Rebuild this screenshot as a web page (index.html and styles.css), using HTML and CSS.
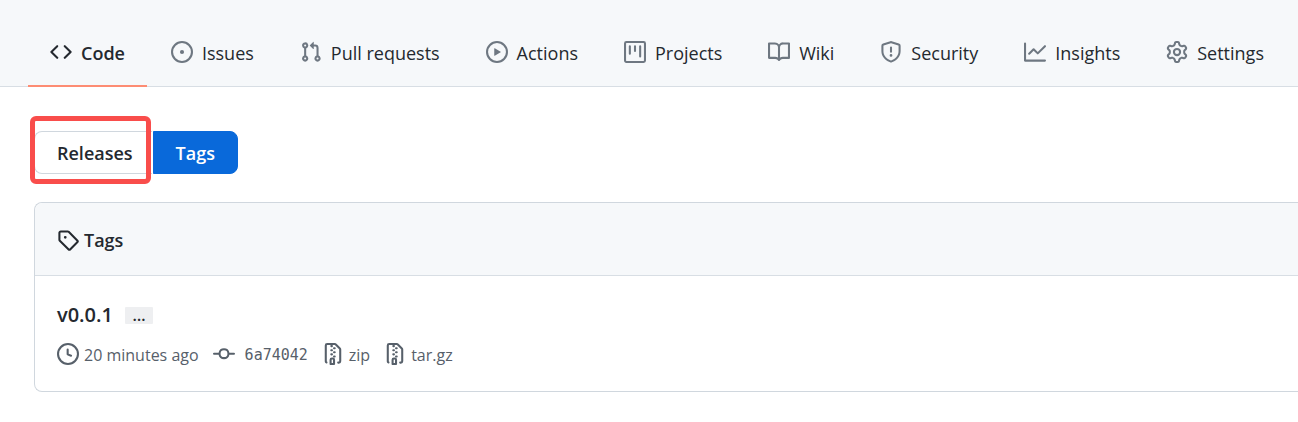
FILE: index.html
```html
<!DOCTYPE html>
<html lang="en">
<head>
<meta charset="utf-8">
<title>Tags</title>
<link rel="stylesheet" href="styles.css">
</head>
<body>
<header class="repo-header">
  <nav class="repo-nav" aria-label="Repository">
    <a class="tab tab-current" href="#code" aria-current="page">
      <svg class="icon" viewBox="0 0 16 16" aria-hidden="true"><path fill-rule="evenodd" d="M4.72 3.22a.75.75 0 011.06 1.06L2.06 8l3.72 3.72a.75.75 0 11-1.06 1.06L.47 8.53a.75.75 0 010-1.06l4.25-4.25zm6.56 0a.75.75 0 10-1.06 1.06L13.94 8l-3.72 3.72a.75.75 0 101.06 1.06l4.25-4.25a.75.75 0 000-1.06l-4.25-4.25z"/></svg>
      <span class="label">Code</span></a>
    <a class="tab" href="#issues">
      <svg class="icon" viewBox="0 0 16 16" aria-hidden="true"><path d="M8 9.5a1.5 1.5 0 100-3 1.5 1.5 0 000 3z"/><path fill-rule="evenodd" d="M8 0a8 8 0 100 16A8 8 0 008 0zM1.5 8a6.5 6.5 0 1113 0 6.5 6.5 0 01-13 0z"/></svg>
      <span class="label">Issues</span></a>
    <a class="tab" href="#pulls">
      <svg class="icon" viewBox="0 0 16 16" aria-hidden="true"><path fill-rule="evenodd" d="M7.177 3.073L9.573.677A.25.25 0 0110 .854v4.792a.25.25 0 01-.427.177L7.177 3.427a.25.25 0 010-.354zM3.75 2.5a.75.75 0 100 1.5.75.75 0 000-1.5zm-2.25.75a2.25 2.25 0 113 2.122v5.256a2.251 2.251 0 11-1.5 0V5.372A2.25 2.25 0 011.5 3.25zM11 2.5h-1V4h1a1 1 0 011 1v5.628a2.251 2.251 0 101.5 0V5A2.5 2.5 0 0011 2.5zm1 10.25a.75.75 0 111.5 0 .75.75 0 01-1.5 0zM3.75 12a.75.75 0 100 1.5.75.75 0 000-1.5z"/></svg>
      <span class="label">Pull requests</span></a>
    <a class="tab" href="#actions">
      <svg class="icon" viewBox="0 0 16 16" aria-hidden="true"><path fill-rule="evenodd" d="M1.5 8a6.5 6.5 0 1113 0 6.5 6.5 0 01-13 0zM8 0a8 8 0 100 16A8 8 0 008 0zM6.379 5.227A.25.25 0 006 5.442v5.117a.25.25 0 00.379.214l4.264-2.559a.25.25 0 000-.428L6.379 5.227z"/></svg>
      <span class="label">Actions</span></a>
    <a class="tab" href="#projects">
      <svg class="icon" viewBox="0 0 16 16" aria-hidden="true"><path fill-rule="evenodd" d="M1.75 0A1.75 1.75 0 000 1.75v12.5C0 15.216.784 16 1.75 16h12.5A1.75 1.75 0 0016 14.25V1.75A1.75 1.75 0 0014.25 0H1.75zM1.5 1.75a.25.25 0 01.25-.25h12.5a.25.25 0 01.25.25v12.5a.25.25 0 01-.25.25H1.75a.25.25 0 01-.25-.25V1.75zM11.75 3a.75.75 0 00-.75.75v7.5a.75.75 0 001.5 0v-7.5a.75.75 0 00-.75-.75zm-8.25.75a.75.75 0 011.5 0v5.5a.75.75 0 01-1.5 0v-5.5zM8 3a.75.75 0 00-.75.75v3.5a.75.75 0 001.5 0v-3.5A.75.75 0 008 3z"/></svg>
      <span class="label">Projects</span></a>
    <a class="tab" href="#wiki">
      <svg class="icon" viewBox="0 0 16 16" aria-hidden="true"><path fill-rule="evenodd" d="M0 1.75A.75.75 0 01.75 1h4.253c1.227 0 2.317.59 3 1.501A3.744 3.744 0 0111.006 1h4.245a.75.75 0 01.75.75v10.5a.75.75 0 01-.75.75h-4.507a2.25 2.25 0 00-1.591.659l-.622.621a.75.75 0 01-1.06 0l-.622-.621A2.25 2.25 0 005.258 13H.75a.75.75 0 01-.75-.75V1.75zm8.755 3a2.25 2.25 0 012.25-2.25H14.5v9h-3.757c-.71 0-1.4.201-1.992.572l.004-7.322zm-1.504 7.324l.004-5.073-.002-2.253A2.25 2.25 0 005.003 2.5H1.5v9h3.757a3.75 3.75 0 011.994.574z"/></svg>
      <span class="label">Wiki</span></a>
    <a class="tab" href="#security">
      <svg class="icon" viewBox="0 0 16 16" aria-hidden="true"><path fill-rule="evenodd" d="M7.467.133a1.75 1.75 0 011.066 0l5.25 1.68A1.75 1.75 0 0115 3.48V7c0 1.566-.32 3.182-1.303 4.682-.983 1.498-2.585 2.813-5.032 3.855a1.7 1.7 0 01-1.33 0c-2.447-1.042-4.049-2.357-5.032-3.855C1.32 10.182 1 8.566 1 7V3.48a1.75 1.75 0 011.217-1.667l5.25-1.68zm.61 1.429a.25.25 0 00-.153 0l-5.25 1.68a.25.25 0 00-.174.238V7c0 1.358.275 2.666 1.057 3.86.784 1.194 2.121 2.34 4.366 3.297a.2.2 0 00.154 0c2.245-.956 3.582-2.104 4.366-3.298C13.225 9.666 13.5 8.36 13.5 7V3.48a.25.25 0 00-.174-.237l-5.25-1.68zM9 10.5a1 1 0 11-2 0 1 1 0 012 0zm-.25-5.75a.75.75 0 10-1.5 0v3a.75.75 0 001.5 0v-3z"/></svg>
      <span class="label">Security</span></a>
    <a class="tab" href="#insights">
      <svg class="icon" viewBox="0 0 16 16" aria-hidden="true"><path fill-rule="evenodd" d="M1.5 1.75a.75.75 0 00-1.5 0v12.5c0 .414.336.75.75.75h14.5a.75.75 0 000-1.5H1.5V1.75zm14.28 2.53a.75.75 0 00-1.06-1.06L10 7.94 7.53 5.47a.75.75 0 00-1.06 0L3.22 8.72a.75.75 0 001.06 1.06L7 7.06l2.47 2.47a.75.75 0 001.06 0l5.25-5.25z"/></svg>
      <span class="label">Insights</span></a>
    <a class="tab" href="#settings">
      <svg class="icon" viewBox="0 0 16 16" aria-hidden="true"><path fill-rule="evenodd" d="M7.429 1.525a6.593 6.593 0 011.142 0c.036.003.108.036.137.146l.289 1.105c.147.56.55.967.997 1.189.174.086.341.183.501.29.417.278.97.423 1.53.27l1.102-.303c.11-.03.175.016.195.046.219.31.41.641.573.989.014.031.022.11-.059.19l-.815.806c-.411.406-.562.957-.53 1.456a4.588 4.588 0 010 .582c-.032.499.119 1.05.53 1.456l.815.806c.08.08.073.159.059.19a6.494 6.494 0 01-.573.99c-.02.029-.086.074-.195.045l-1.103-.303c-.559-.153-1.112-.008-1.529.27-.16.107-.327.204-.5.29-.449.222-.851.628-.998 1.189l-.289 1.105c-.029.11-.101.143-.137.146a6.613 6.613 0 01-1.142 0c-.036-.003-.108-.037-.137-.146l-.289-1.105c-.147-.56-.55-.967-.997-1.189a4.502 4.502 0 01-.501-.29c-.417-.278-.97-.423-1.53-.27l-1.102.303c-.11.03-.175-.016-.195-.046a6.492 6.492 0 01-.573-.989c-.014-.031-.022-.11.059-.19l.815-.806c.411-.406.562-.957.53-1.456a4.587 4.587 0 010-.582c.032-.499-.119-1.05-.53-1.456l-.815-.806c-.08-.08-.073-.159-.059-.19a6.44 6.44 0 01.573-.99c.02-.029.086-.075.195-.045l1.103.303c.559.153 1.112.008 1.529-.27.16-.107.327-.204.5-.29.449-.222.851-.628.998-1.189l.289-1.105c.029-.11.101-.143.137-.146zM8 0c-.236 0-.47.01-.701.03-.743.065-1.29.615-1.458 1.261l-.29 1.106c-.017.066-.078.158-.211.224a5.994 5.994 0 00-.668.386c-.123.082-.233.09-.3.071L3.27 2.776c-.644-.177-1.392.02-1.82.63a7.977 7.977 0 00-.704 1.217c-.315.675-.111 1.422.363 1.891l.815.806c.05.048.098.147.088.294a6.084 6.084 0 000 .772c.01.147-.038.246-.088.294l-.815.806c-.474.469-.678 1.216-.363 1.891.2.428.436.835.704 1.218.428.609 1.176.806 1.82.63l1.103-.303c.066-.019.176-.011.299.071.213.143.436.272.668.386.133.066.194.158.212.224l.289 1.106c.169.646.715 1.196 1.458 1.26a8.094 8.094 0 001.402 0c.743-.064 1.29-.614 1.458-1.26l.29-1.106c.017-.066.078-.158.211-.224a5.98 5.98 0 00.668-.386c.123-.082.233-.09.3-.071l1.102.302c.644.177 1.392-.02 1.82-.63.268-.382.505-.789.704-1.217.315-.675.111-1.422-.364-1.891l-.814-.806c-.05-.048-.098-.147-.088-.294a6.1 6.1 0 000-.772c-.01-.147.039-.246.088-.294l.814-.806c.475-.469.679-1.216.364-1.891a7.992 7.992 0 00-.704-1.218c-.428-.609-1.176-.806-1.82-.63l-1.103.303c-.066.019-.176.011-.299-.071a5.991 5.991 0 00-.668-.386c-.133-.066-.194-.158-.212-.224L10.16 1.29C9.99.645 9.444.095 8.701.031A8.094 8.094 0 008 0zm1.5 8a1.5 1.5 0 11-3 0 1.5 1.5 0 013 0zM11 8a3 3 0 11-6 0 3 3 0 016 0z"/></svg>
      <span class="label">Settings</span></a>
  </nav>
</header>
<main class="content">
  <nav class="switch" aria-label="Releases and tags">
    <div class="highlighted"><a class="switch-item switch-first" href="#releases">Releases</a></div>
    <a class="switch-item switch-selected" href="#tags" aria-current="page">Tags</a>
  </nav>
  <section class="card">
    <h2 class="card-header">
      <svg class="icon" viewBox="0 0 16 16" aria-hidden="true"><path fill-rule="evenodd" d="M2.5 7.775V2.75a.25.25 0 01.25-.25h5.025a.25.25 0 01.177.073l6.25 6.25a.25.25 0 010 .354l-5.025 5.025a.25.25 0 01-.354 0l-6.25-6.25a.25.25 0 01-.073-.177zm-1.5 0V2.75C1 1.784 1.784 1 2.75 1h5.025c.464 0 .91.184 1.238.513l6.25 6.25a1.75 1.75 0 010 2.474l-5.026 5.026a1.75 1.75 0 01-2.474 0l-6.25-6.25A1.75 1.75 0 011 7.775zM6 5a1 1 0 100 2 1 1 0 000-2z"/></svg>
      <span>Tags</span>
    </h2>
    <div class="card-body">
      <div class="tag-title">
        <h3 class="tag-name"><a href="#v0.0.1">v0.0.1</a></h3>
        <button class="expander" type="button" aria-label="Show details">…</button>
      </div>
      <ul class="meta">
        <li class="meta-item"><svg class="icon" viewBox="0 0 16 16" aria-hidden="true"><path fill-rule="evenodd" d="M1.5 8a6.5 6.5 0 1113 0 6.5 6.5 0 01-13 0zM8 0a8 8 0 100 16A8 8 0 008 0zm.5 4.75a.75.75 0 00-1.5 0v3.5a.75.75 0 00.471.696l2.5 1a.75.75 0 00.557-1.392L8.5 7.742V4.75z"/></svg><time class="label">20 minutes ago</time></li>
        <li><a class="meta-item meta-commit" href="#commit"><svg class="icon" viewBox="0 0 16 16" aria-hidden="true"><path fill-rule="evenodd" d="M10.5 7.75a2.5 2.5 0 11-5 0 2.5 2.5 0 015 0zm1.43.75a4.002 4.002 0 01-7.86 0H.75a.75.75 0 110-1.5h3.32a4.001 4.001 0 017.86 0h3.32a.75.75 0 110 1.5h-3.32z"/></svg><code class="label hash">6a74042</code></a></li>
        <li><a class="meta-item" href="#zip"><svg class="icon" viewBox="0 0 16 16" aria-hidden="true"><path fill-rule="evenodd" d="M3.5 1.75a.25.25 0 01.25-.25h3a.75.75 0 000 1.5h.5a.75.75 0 000-1.5h2.086a.25.25 0 01.177.073l2.914 2.914a.25.25 0 01.073.177v8.586a.25.25 0 01-.25.25h-.5a.75.75 0 000 1.5h.5A1.75 1.75 0 0014 13.25V4.664c0-.464-.184-.909-.513-1.237L10.573.513A1.75 1.75 0 009.336 0H3.75A1.75 1.75 0 002 1.75v11.5c0 .649.353 1.214.874 1.515a.75.75 0 10.752-1.298.25.25 0 01-.126-.217V1.75zM8.75 3a.75.75 0 000 1.5h.5a.75.75 0 000-1.5h-.5zM6 5.25a.75.75 0 01.75-.75h.5a.75.75 0 010 1.5h-.5A.75.75 0 016 5.25zm2 1.5A.75.75 0 018.75 6h.5a.75.75 0 010 1.5h-.5A.75.75 0 018 6.75zm-1.25.75a.75.75 0 000 1.5h.5a.75.75 0 000-1.5h-.5zM8 9.75A.75.75 0 018.75 9h.5a.75.75 0 010 1.5h-.5A.75.75 0 018 9.75zm-.75.75a1.75 1.75 0 00-1.75 1.75v3c0 .414.336.75.75.75h2.5a.75.75 0 00.75-.75v-3a1.75 1.75 0 00-1.75-1.75h-.5zM7 12.25a.25.25 0 01.25-.25h.5a.25.25 0 01.25.25v2.25H7v-2.25z"/></svg><span class="label">zip</span></a></li>
        <li><a class="meta-item" href="#targz"><svg class="icon" viewBox="0 0 16 16" aria-hidden="true"><path fill-rule="evenodd" d="M3.5 1.75a.25.25 0 01.25-.25h3a.75.75 0 000 1.5h.5a.75.75 0 000-1.5h2.086a.25.25 0 01.177.073l2.914 2.914a.25.25 0 01.073.177v8.586a.25.25 0 01-.25.25h-.5a.75.75 0 000 1.5h.5A1.75 1.75 0 0014 13.25V4.664c0-.464-.184-.909-.513-1.237L10.573.513A1.75 1.75 0 009.336 0H3.75A1.75 1.75 0 002 1.75v11.5c0 .649.353 1.214.874 1.515a.75.75 0 10.752-1.298.25.25 0 01-.126-.217V1.75zM8.75 3a.75.75 0 000 1.5h.5a.75.75 0 000-1.5h-.5zM6 5.25a.75.75 0 01.75-.75h.5a.75.75 0 010 1.5h-.5A.75.75 0 016 5.25zm2 1.5A.75.75 0 018.75 6h.5a.75.75 0 010 1.5h-.5A.75.75 0 018 6.75zm-1.25.75a.75.75 0 000 1.5h.5a.75.75 0 000-1.5h-.5zM8 9.75A.75.75 0 018.75 9h.5a.75.75 0 010 1.5h-.5A.75.75 0 018 9.75zm-.75.75a1.75 1.75 0 00-1.75 1.75v3c0 .414.336.75.75.75h2.5a.75.75 0 00.75-.75v-3a1.75 1.75 0 00-1.75-1.75h-.5zM7 12.25a.25.25 0 01.25-.25h.5a.25.25 0 01.25.25v2.25H7v-2.25z"/></svg><span class="label">tar.gz</span></a></li>
      </ul>
    </div>
  </section>
</main>
</body>
</html>
```
FILE: styles.css
```css
* {
  box-sizing: border-box;
}

body {
  margin: 0;
  background: #ffffff;
  color: #24292f;
  font-family: "Segoe UI", "Open Sans", "Noto Sans", sans-serif;
  font-size: 18px;
  line-height: 28px;
}

a {
  color: inherit;
  text-decoration: none;
}

.icon {
  display: block;
  flex: none;
  width: 22px;
  height: 22px;
  fill: currentColor;
}

.label {
  padding-top: 2px;
  line-height: 26px;
}

.repo-header {
  padding: 18px 12px 0 28px;
  background: #f6f8fa;
  box-shadow: inset 0 -1px 0 #d8dee4;
}

.repo-nav {
  display: flex;
  justify-content: space-between;
}

.tab {
  display: flex;
  align-items: center;
  gap: 9px;
  padding: 20px 22px 19px;
  border-bottom: 2px solid transparent;
  white-space: nowrap;
}

.tab .icon {
  color: #6e7781;
}

.tab-current {
  border-bottom-color: #fd8c73;
  font-weight: 600;
}

.tab-current .icon {
  color: inherit;
}

.content {
  padding: 44px 0 30px 34px;
}

.switch {
  display: flex;
  margin-bottom: 28px;
  font-weight: 600;
}

.switch-item {
  display: block;
  padding: 7px 22px 6px;
  border: 1px solid #d0d7de;
}

.switch-first {
  padding-right: 19px;
  border-right: 0;
  border-radius: 8px 0 0 8px;
}

.switch-selected {
  border-color: #0969da;
  border-radius: 0 8px 8px 0;
  background: #0969da;
  color: #ffffff;
}

.highlighted {
  position: relative;
  padding-right: 1px;
}

.highlighted::after {
  content: "";
  position: absolute;
  inset: -15px 2px -10px -4px;
  border: 5px solid #f94d4b;
  border-radius: 6px;
  pointer-events: none;
}

.card {
  border: 1px solid #d0d7de;
  border-right: 0;
  border-radius: 8px 0 0 8px;
}

.card-header {
  display: flex;
  align-items: center;
  gap: 5px;
  margin: 0;
  padding: 23px 22px 21px;
  border-bottom: 1px solid #d8dee4;
  border-radius: 8px 0 0;
  background: #f6f8fa;
  font-size: 18px;
  font-weight: 600;
}

.card-body {
  padding: 22px 22px 23px;
}

.tag-title {
  display: flex;
  align-items: center;
  gap: 12px;
}

.tag-name {
  margin: 0;
  font-size: 20px;
  line-height: 34px;
  font-weight: 600;
}

.expander {
  width: 28px;
  height: 17px;
  padding: 0;
  border: 0;
  border-radius: 1px;
  background: #eeeff1;
  color: #24292f;
  font: 600 16px/10px "Open Sans", sans-serif;
}

.meta {
  display: flex;
  gap: 14px;
  margin: 8px 0 0;
  padding: 0;
  color: #57606a;
  font-size: 16px;
  list-style: none;
}

.meta-item {
  display: flex;
  align-items: center;
  gap: 5px;
}

.meta-commit {
  gap: 10px;
}

.hash {
  font-family: "DejaVu Sans Mono", monospace;
  font-size: 15px;
}
```
